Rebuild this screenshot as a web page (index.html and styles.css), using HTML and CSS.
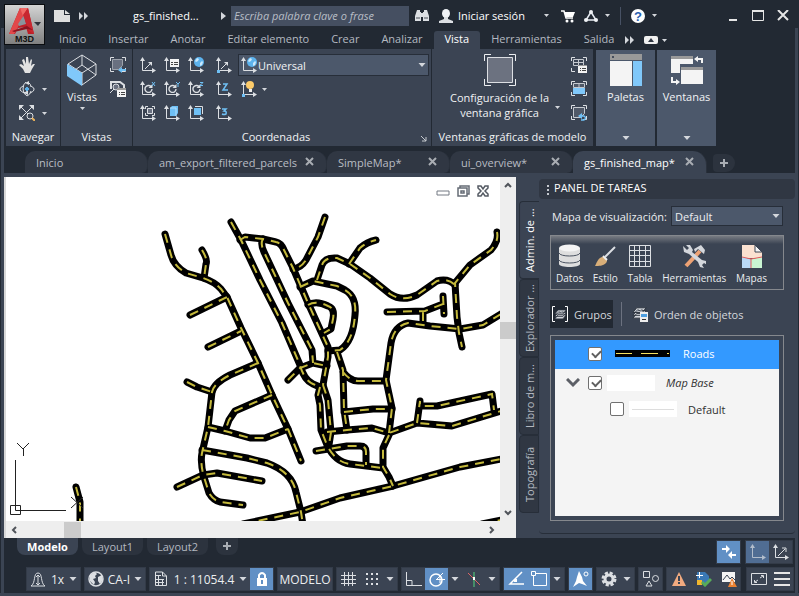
FILE: index.html
```html
<!DOCTYPE html>
<html lang="es">
<head>
<meta charset="utf-8">
<title>gs_finished_map</title>
<link rel="stylesheet" href="styles.css">
</head>
<body>
<svg class="defs" aria-hidden="true">
  <defs>
    <symbol id="axes" viewBox="0 0 16 16"><path d="M2.500 3v10.500H13" fill="none" stroke="#dcdfe3"/><path d="M2.500 0L5 4H0zM16 13.500L12 11v5z" fill="#dcdfe3"/></symbol>
    <symbol id="caret" viewBox="0 0 7 4"><path d="M0 0h7L3.500 4z" fill="#d4d7dc"/></symbol>
    <symbol id="more" viewBox="0 0 10 8"><path d="M0 0l4 4-4 4zM5 0l4 4-4 4z" fill="#d4d7dc"/></symbol>
    <symbol id="close" viewBox="0 0 10 10"><path d="M1 1l7 7M8 1L1 8" fill="none" stroke="#a9adb3" stroke-width="2"/></symbol>
    <symbol id="plus" viewBox="0 0 10 10"><path d="M5 1v8M1 5h8" fill="none" stroke="#a9adb3" stroke-width="2"/></symbol>
    <symbol id="corners" viewBox="0 0 16 16"><path d="M.500 4V.500H4M12 .500h3.500V4M.500 11v3.500H4M15.500 11v3.500H12" fill="none" stroke="#dcdfe3"/></symbol>
    <symbol id="globe" viewBox="0 0 10 10"><circle cx="5" cy="5" r="5" fill="#5cb3ee"/><path d="M1 4l2-3 2 1-1 2-2 1zM6 6l2-2 1 1-1 3-2 1z" fill="#c9e8fc"/></symbol>
    <symbol id="turn" viewBox="0 0 9 9"><path d="M7 2.500A3.500 3.500 0 1 0 8 5" fill="none" stroke="#dcdfe3" stroke-width="1.400"/><path d="M8.500 0v4H4.500z" fill="#dcdfe3"/></symbol>
    <symbol id="layers" viewBox="0 0 16 16"><path d="M1 14l4-5h10l-4 5zM1 11l4-5h10l-4 5zM1 8l4-5h10l-4 5z" fill="#d4d7dc" stroke="#2b323d"/><path d="M4 7l2-3h2L6 7zM8 7l2-3h2l-2 3z" fill="#8a9099"/></symbol>
    <g id="roads">
      <path d="M165 234L171 255Q174 266 186 273L203 278Q215 282 221 289L227 297 241 328 258 363 272 395 288 429 301 461"/>
      <path d="M202 250Q208 260 206 264L204 278M190 315L227 297M208 347L241 331"/>
      <path d="M258 363L230 375Q214 383 212 392L208 427 202 453Q200 463 204 477L209 493Q213 500 220 502L243 505"/>
      <path d="M187 382L197 387 212 392M208 427L225 431 250 438H265L288 429"/>
      <path d="M272 395L235 411 229 420 225 431"/>
      <path d="M202 450L247 458 267 463Q292 472 296 492L301 512 303 525"/>
      <path d="M177 487L203 475 217 473 262 481"/>
      <path d="M243 524L300 512 340 498 393 486 460 467 501 459"/>
      <path d="M231 222L241 240 260 280 282 323 300 365Q304 380 313 384L320 387"/>
      <path d="M240 240L245 237 263 239 276 242Q281 243 284 250L293 268 308 303 328 347V357L323 385"/>
      <path d="M263 239Q260 243 264 252L288 303 312 350 313 363M288 380L300 368 313 363 327 366"/>
      <path d="M325 217L318 237 306 260Q301 268 293 269"/>
      <path d="M300 287L313 281 337 286 345 290Q357 297 355 315 353 342 340 350L328 351"/>
      <path d="M308 305Q316 300 328 306 335 308 333 319L331 329 324 333"/>
      <path d="M317 280L322 265Q325 257 337 258L350 264 370 278 390 294Q402 302 417 295L437 281Q448 278 455 285"/>
      <path d="M349 264L360 248Q367 242 376 240M497 232Q499 241 491 250L470 265 455 283 457 317 459 333 462 347"/>
      <path d="M387 312L425 311 443 304M443 296L444 314M423 312V324"/>
      <path d="M501 314L483 325 460 329 430 326 408 323Q394 326 391 343L386 380 392 408 389 433"/>
      <path d="M337 352L343 370 344 410 347 430M343 372Q350 381 358 381H386M344 412L373 409H392"/>
      <path d="M327 432L347 430 372 428 389 433 417 423 452 426 501 411M417 423L420 401V406H437L492 394 494 410"/>
      <path d="M389 435L383 448V467L389 477 393 486M316 451L347 446H360Q366 446 366 452V465"/>
      <path d="M320 387L318 395 320 405 321 430 327 445Q335 462 350 464L383 468M323 385L328 400 331 432 329 445"/>
      <path d="M76 487L80 502V524M482 524L501 520"/>
    </g>
  </defs>
</svg>

<div class="app">
  <header class="top">
    <button class="logo" aria-label="Menú de la aplicación">
      <svg viewBox="0 0 39 39">
        <path d="M4 29L15 3h8l6 26h-6l-2-7-8 1-3 6z" fill="#bd1f28"/>
        <path d="M4 29L15 3l4 7-8 16-2 3z" fill="#e2484a"/><path d="M15 3h8l-5 8z" fill="#f06a66"/><path d="M13 19l6-9 2 9-7 2z" fill="#8b949c"/><path d="M18 10l5-7 6 26-5-3z" fill="#c72730"/><path d="M7 26l15-5 6 4-6-1-13 3z" fill="#8d1420"/>
        <path d="M29 17h7l-3 4z" fill="#30343c"/>
        <text x="10" y="37" class="logo-text">M3D</text>
      </svg>
    </button>
    <div class="titlebar">
      <svg class="doc" viewBox="0 0 16 12"><path d="M0 0h10v5h6v7H0zM11 0l5 4h-5z" fill="#dedede"/></svg>
      <svg class="more" ><use href="#more"/></svg>
      <h1>gs_finished...</h1>
      <svg class="play" viewBox="0 0 5 8"><path d="M0 0l5 4-5 4z" fill="#d4d7dc"/></svg>
      <input class="search" type="text" aria-label="Buscar" placeholder="Escriba palabra clave o frase">
      <svg class="i14 binoc" viewBox="0 0 14 14"><path d="M2 1h3v2h1v9H0V7zM9 1h3l2 6v5H8V3h1zM6 4h2v4H6z" fill="#dcdfe3"/><path d="M1 9h4M9 9h4" stroke="#4a505a"/></svg>
      <svg class="i14 user" viewBox="0 0 14 14"><ellipse cx="7" cy="4.500" rx="4" ry="4.500" fill="#f0f2f6"/><path d="M5 8h4v2l5 2v2H0v-2l5-2z" fill="#dcdfe3"/></svg>
      <a href="#sesion">Iniciar sesión</a>
      <svg class="caret gap-a"><use href="#caret"/></svg>
      <svg class="i14 cart" viewBox="0 0 14 14"><path d="M0 2h3l2 7h7" fill="none" stroke="#fff" stroke-width="1.500"/><path d="M3 3h11l-2 5H5z" fill="#fff"/><circle cx="6" cy="12" r="1.500" fill="#fff"/><circle cx="11" cy="12" r="1.500" fill="#fff"/></svg>
      <svg class="i14 share" viewBox="0 0 14 14"><path d="M7 3l-5 8h10z" fill="none" stroke="#e6eaf2" stroke-width="1.500"/><circle cx="7" cy="3" r="2" fill="#f0f2f6"/><circle cx="2" cy="11" r="2" fill="#f0f2f6"/><circle cx="12" cy="11" r="2" fill="#f0f2f6"/></svg>
      <svg class="caret gap-b"><use href="#caret"/></svg>
      <span class="rule"></span>
      <svg class="i14" viewBox="0 0 14 14"><circle cx="7" cy="7" r="7" fill="#fff"/><text x="7" y="12" text-anchor="middle" class="help-text">?</text></svg>
      <svg class="caret gap-b"><use href="#caret"/></svg>
      <div class="winbtns">
        <button aria-label="Minimizar"><svg viewBox="0 0 12 12"><path d="M2 10h8" stroke="#e6e6e6" stroke-width="2"/></svg></button>
        <button aria-label="Maximizar"><svg viewBox="0 0 12 12"><path d="M.500 .500h11v10H.500z" fill="none" stroke="#e6e6e6"/><path d="M0 1h12" stroke="#e6e6e6" stroke-width="2"/></svg></button>
        <button aria-label="Cerrar"><svg viewBox="0 0 12 12"><path d="M1 0l10 10M11 0L1 10" stroke="#e6e6e6" stroke-width="2"/></svg></button>
      </div>
    </div>
    <nav class="menu">
      <a href="#inicio">Inicio</a><a href="#insertar">Insertar</a><a href="#anotar">Anotar</a><a href="#editar">Editar elemento</a><a href="#crear">Crear</a><a href="#analizar">Analizar</a><a href="#vista" class="on">Vista</a><a href="#herramientas">Herramientas</a><a href="#salida">Salida</a>
      <svg class="more"><use href="#more"/></svg>
      <svg class="pill" viewBox="0 0 14 8"><rect width="14" height="8" rx="2" fill="#f0f0f0"/><path d="M4 6l3-4 3 4z" fill="#303743"/></svg>
      <svg class="caret"><use href="#caret"/></svg>
    </nav>
  </header>

  <section class="ribbon">
    <div class="panel p-nav">
      <div class="nav-grid">
        <svg class="i16" viewBox="0 0 16 16"><path d="M6 16L4 12 0 8l2-1 3 2-2-6 2-1 2 5V0h2l1 7 2-5 1 1-1 6 2-2h2l-3 5-2 4z" fill="#e2e2e2"/></svg><span></span>
        <svg class="i16" viewBox="0 0 16 16"><path d="M7 1Q4 3 4 8t4 7q3-1 4-5M9 1q3 2 3 5M4 5Q0 7 1 9q2 3 7 3M12 5q4 2 3 4-1 2-4 3" fill="none" stroke="#dcdfe3"/><path d="M10 0v4L6 2zM9 9v5l-4-2z" fill="#dcdfe3"/><path d="M6 8h4M8 6v4" stroke="#5bb0e8" stroke-width="2"/></svg><svg class="caret"><use href="#caret"/></svg>
        <svg class="i16" viewBox="0 0 16 16"><path d="M1 1l9 9M14 1L1 14" stroke="#dcdfe3"/><path d="M0 0h5L0 5zM15 0v5l-5-5zM0 15v-5l5 5z" fill="#dcdfe3"/><circle cx="11" cy="11" r="3" fill="#3b4453" stroke="#dcdfe3"/><path d="M13 13l3 3" stroke="#e8b25c" stroke-width="2"/></svg><svg class="caret"><use href="#caret"/></svg>
      </div>
      <h2>Navegar</h2>
    </div>
    <div class="panel p-views">
      <div class="row">
        <button class="big"><svg class="i32" viewBox="0 0 32 32"><path d="M16 1L2 10v11l14 10 14-10V10zM16 1v10M2 10l14 9 14-9M16 19v12M16 11L2 21M16 11l14 10" fill="none" stroke="#dcdfe3"/><path d="M1 10l15 9v13L1 22z" fill="#80c8fa"/></svg><span>Vistas</span><svg class="caret"><use href="#caret"/></svg></button>
        <div class="stack">
          <svg class="i16" viewBox="0 0 16 16"><use href="#corners"/><path d="M2.500 2.500h10v6l-4 4h-6z" fill="#697080" stroke="#9da2ab"/><path d="M8 13l4-3v2h4v2h-4v2z" fill="#6fc0f5"/></svg>
          <svg class="i16" viewBox="0 0 16 16"><path d="M1 8V1h9l4 3v3" fill="none" stroke="#dcdfe3" stroke-width="2"/><circle cx="6" cy="6" r="3" fill="#697080" stroke="#dcdfe3"/><path d="M4 8l-4 4" stroke="#dcdfe3"/><path d="M7 7h9v9H7z" fill="#f4f4f4"/><path d="M7 8h9" stroke="#9a9a9a" stroke-width="2"/><path d="M9 11.500h1m1 0h4M9 13.500h1m1 0h4" stroke="#444"/></svg>
        </div>
      </div>
      <h2>Vistas</h2>
    </div>
    <div class="panel p-coord">
      <div class="row">
        <div class="coord-grid">
          <svg viewBox="0 0 16 16"><use href="#axes"/><path d="M5 12l5-5" stroke="#dcdfe3"/><path d="M12 5v4L8 5z" fill="#dcdfe3"/></svg>
          <svg viewBox="0 0 16 16"><use href="#axes"/><path d="M6 2h9v8H6z" fill="#f4f4f4"/><path d="M7 5.500h2m1 0h4M7 7.500h2m1 0h4" stroke="#444"/></svg>
          <svg viewBox="0 0 16 16"><use href="#axes"/><use href="#globe" x="6" y="0" width="10" height="10"/></svg>
          <svg viewBox="0 0 16 16"><use href="#axes"/><path d="M5 12l5-5" stroke="#dcdfe3"/><path d="M12 5v4L8 5z" fill="#dcdfe3"/><path d="M1 13h3v3H1z" fill="#6fc0f5"/></svg>
          <svg viewBox="0 0 16 16"><use href="#axes"/><use href="#turn" x="4" y="3" width="9" height="9"/><path d="M12 1l3 4M15 1l-3 4" stroke="#6fc0f5"/></svg>
          <svg viewBox="0 0 16 16"><use href="#axes"/><use href="#turn" x="4" y="3" width="9" height="9"/><path d="M12 1l2 2 2-2M14 3v3" stroke="#6fc0f5" fill="none"/></svg>
          <svg viewBox="0 0 16 16"><use href="#axes"/><use href="#turn" x="4" y="3" width="9" height="9"/><path d="M12 1.500h3l-3 3h3" stroke="#6fc0f5" fill="none"/></svg>
          <svg viewBox="0 0 16 16"><use href="#axes"/><path d="M7 3h4l-4 6h5" stroke="#6fc0f5" fill="none" stroke-width="1.500"/></svg>
          <svg viewBox="0 0 16 16"><use href="#axes"/><path d="M5.500 4V1.500H8M12 1.500h2.500V4M5.500 8v2.500H8M14.500 8v2.500H12" fill="none" stroke="#dcdfe3"/><path d="M7.500 3.500h5v5h-5z" fill="#697080" stroke="#dcdfe3"/></svg>
          <svg viewBox="0 0 16 16"><use href="#axes"/><path d="M6 3l2-2h6v7l-2 3H6z" fill="#6fc0f5"/><path d="M6 3h6v8" fill="none" stroke="#b5e0ff"/></svg>
          <svg viewBox="0 0 16 16"><use href="#axes"/><path d="M7 1.500h7.500V9" fill="none" stroke="#dcdfe3"/><path d="M6 3h7v7H6z" fill="#6fc0f5"/></svg>
          <svg viewBox="0 0 16 16"><use href="#axes"/><path d="M6 4h4l-2 2q3 0 2 3-2 1-4 0" stroke="#6fc0f5" fill="none" stroke-width="1.500"/></svg>
        </div>
        <div class="ucs">
          <div class="combo">
            <svg class="i16" viewBox="0 0 16 16"><use href="#axes"/><use href="#globe" x="6" y="0" width="10" height="10"/></svg>
            <select aria-label="Sistema de coordenadas"><option>Universal</option></select>
            <svg class="caret wide"><use href="#caret"/></svg>
          </div>
          <div class="bulb"><svg class="i16" viewBox="0 0 16 16"><use href="#axes"/><circle cx="9" cy="4" r="4" fill="#fccb6a"/><path d="M8 8h3v3H8z" fill="#eee"/><path d="M1 13h3v3H1z" fill="#6fc0f5"/></svg><svg class="caret"><use href="#caret"/></svg></div>
        </div>
      </div>
      <h2>Coordenadas<svg class="launch" viewBox="0 0 6 6"><path d="M0 0l5 5M5 1v4H1" fill="none" stroke="#c5c9cf"/></svg></h2>
    </div>
    <div class="panel p-vports">
      <div class="row">
        <button class="big cfg"><svg class="i32" viewBox="0 0 32 32"><path d="M.500 7V.500H7M25 .500h6.500V7M.500 25v6.500H7M31.500 25v6.500H25" fill="none" stroke="#eceef0"/><path d="M3.500 3.500h25v25h-25z" fill="#6c7280" stroke="#dcdfe3"/></svg><span>Configuración de la<br>ventana gráfica</span></button>
        <svg class="caret side"><use href="#caret"/></svg>
        <div class="stack three">
          <svg class="i16" viewBox="0 0 16 16"><use href="#corners"/><path d="M2.500 2.500h10v6h-10zM7.500 3v6M3 5.500h9" fill="none" stroke="#c5c9cf"/><path d="M7 8h9v8H7z" fill="#f4f4f4"/><path d="M7 8.500h9" stroke="#9a9a9a"/><path d="M9 11.500h1m1 0h4M9 13.500h1m1 0h4" stroke="#444"/></svg>
          <svg class="i16" viewBox="0 0 16 16"><use href="#corners"/><path d="M2.500 2.500h11v4h-11zM8 3v4" fill="#505968" stroke="#c5c9cf"/><path d="M2 7h12v6H2z" fill="#80c8fa"/></svg>
          <svg class="i16" viewBox="0 0 16 16"><use href="#corners"/><path d="M2.500 2.500h11v6l-4 4h-7z" fill="#505968" stroke="#c5c9cf"/><path d="M9 11h4q3 2 0 4h-3" fill="none" stroke="#6fc0f5" stroke-width="1.500"/><path d="M11 8v6l-4-3z" fill="#6fc0f5"/></svg>
        </div>
      </div>
      <h2>Ventanas gráficas de modelo</h2>
    </div>
    <button class="tile"><svg class="i32" viewBox="0 0 32 32"><path d="M0 0h32v6H0z" fill="#999"/><path d="M2 2h2v2H2z" fill="#444d5c"/><path d="M0 7h22v25H0z" fill="#f4f4f4"/><path d="M23 7h9v25h-9z" fill="#80c8fa"/></svg><span>Paletas</span><svg class="caret wide"><use href="#caret"/></svg></button>
    <button class="tile"><svg class="i32" viewBox="0 0 32 32"><path d="M0 5h22v5H9v9H0zM10 16h22v14H10z" fill="#f4f4f4"/><path d="M0 2h22v3H0zM10 13h22v3H10z" fill="#999"/><path d="M31 9V5h-5M1 23v5h6" fill="none" stroke="#f4f4f4" stroke-width="2"/><path d="M23 5l4-3v6zM9 28l-4-3v6z" fill="#f4f4f4"/></svg><span>Ventanas</span><svg class="caret wide"><use href="#caret"/></svg></button>
  </section>

  <nav class="files">
    <div class="file">Inicio</div>
    <div class="file">am_export_filtered_parcels<svg class="x"><use href="#close"/></svg></div>
    <div class="file">SimpleMap*<svg class="x"><use href="#close"/></svg></div>
    <div class="file">ui_overview*<svg class="x"><use href="#close"/></svg></div>
    <div class="file on">gs_finished_map*<svg class="x"><use href="#close"/></svg></div>
    <button class="add" aria-label="Nuevo dibujo"><svg class="x"><use href="#plus"/></svg></button>
  </nav>

  <main class="work">
    <section class="canvas">
      <svg class="map" viewBox="6 177 494 344" preserveAspectRatio="xMinYMin slice" role="img" aria-label="Mapa de carreteras">
        <use href="#roads" class="road"/><use href="#roads" class="dash"/>
        <path d="M17 443l6 6 6-6M23.500 449v7M15.500 460v50.500H66M10.500 505.500h10v9h-10zM71 497l12 11M83 497l-12 11" class="ucs-mark"/>
      </svg>
      <div class="mapbtns">
        <svg viewBox="0 0 14 12"><path d="M1 6h12v4H1z" fill="#fff" stroke="#747b84"/></svg>
        <svg viewBox="0 0 14 12"><path d="M4 3V1h9v8h-2M2 3h9v8H2zM5 6h3v2H5z" fill="none" stroke="#666c76" stroke-width="1.500"/></svg>
        <svg viewBox="0 0 14 12"><path d="M2 1h3l2 3 2-3h3v2L9 6l3 3v2H9L7 8l-2 3H2V9l3-3-3-3z" fill="#fff" stroke="#555b64" stroke-width="1.500"/></svg>
      </div>
      <div class="vscroll"><svg viewBox="0 0 8 8"><path d="M1 6l3-3 3 3" /></svg><i></i><svg viewBox="0 0 8 8"><path d="M1 2l3 3 3-3"/></svg></div>
      <div class="hscroll"><svg viewBox="0 0 8 8"><path d="M6 1L3 4l3 3"/></svg><i></i><svg viewBox="0 0 8 8"><path d="M2 1l3 3-3 3"/></svg></div>
    </section>

    <aside class="tasks">
      <nav class="vtabs"><button class="on">Admin. de ...</button><button>Explorador ...</button><button>Libro de m...</button><button>Topografía</button></nav>
      <div class="taskbody">
        <h2>PANEL DE TAREAS</h2>
        <div class="content">
          <div class="mapsel"><label for="mapa">Mapa de visualización:</label><div class="combo"><select id="mapa"><option>Default</option></select><svg class="caret wide"><use href="#caret"/></svg></div></div>
          <div class="tools">
            <button><svg viewBox="0 0 24 24"><path d="M1 4v16c0 4 21 4 21 0V4z" fill="#dedede"/><ellipse cx="11.500" cy="4" rx="10.500" ry="3.500" fill="#f4f4f4"/><path d="M1 9c1 4 20 4 21 0M1 16c1 4 20 4 21 0" fill="none" stroke="#4a5260"/></svg>Datos</button>
            <button><svg viewBox="0 0 24 24"><path d="M12 13l10-10" stroke="#dcdfe3" stroke-width="2"/><path d="M2 22c2-3 2-7 7-9 3-1 7 3 4 6-3 3-7 3-11 3z" fill="#d8ae78"/><path d="M10 12l4 4" stroke="#eee" stroke-width="2"/></svg>Estilo</button>
            <button><svg viewBox="0 0 24 24"><path d="M1.500 1.500h21v21h-21zM2 6.500h21M2 11.500h21M2 17.500h21M6.500 2v21M11.500 2v21M17.500 2v21" fill="none" stroke="#dcdfe3"/></svg>Tabla</button>
            <button><svg viewBox="0 0 24 24"><path d="M4 22L18 7" stroke="#eda274" stroke-width="4"/><path d="M12 5l7-4 4 5-1 4-6-5-3 3zM1 2l4 4 2-2-3-3 4 0 3 5-1 2 10 8 4 1 1 4-3-2-2 2 2 3-4-1-2-5L7 10 2 8z" fill="#d4d7dc"/></svg>Herramientas</button>
            <button><svg viewBox="0 0 24 24"><path d="M2 1h13l7 7v6H2z" fill="#fbe1d0"/><path d="M2 13l9 2v9H2z" fill="#b9d9f6"/><path d="M11 15l11-2v11H11z" fill="#c9f5d2"/><path d="M15 1v7h7z" fill="#f4f4f4" stroke="#3b4453"/><path d="M2 13l9 2 11-2M11 15v9" fill="none" stroke="#e05b5b"/></svg>Mapas</button>
          </div>
          <div class="modes">
            <button class="on"><svg class="i16" viewBox="0 0 16 16"><use href="#layers" x="2" y="1" width="13" height="14"/><path d="M3 .500H.500v15H3M13 .500h2.500v15H13" fill="none" stroke="#fff"/></svg>Grupos</button>
            <button><svg class="i16" viewBox="0 0 16 16"><use href="#layers" x="0" y="-1" width="15" height="15"/><path d="M8 6h8v10H8z" fill="#eee"/><path d="M9 8h6v3H9z" fill="#4f9fe0"/><path d="M10 13.500h4" stroke="#333"/></svg>Orden de objetos</button>
          </div>
          <div class="tree">
            <div class="list">
              <label class="item sel"><input type="checkbox" checked><svg class="sample line" viewBox="0 0 55 7"><path d="M0 0h55v7H0z"/><path d="M1 3.500h16m9 0h17m9 0h2" stroke="#f6e05e"/></svg><span>Roads</span></label>
              <label class="item base"><svg class="chev" viewBox="0 0 14 10"><path d="M1 1l6 6 6-6" fill="none" stroke="#5c5f66" stroke-width="3"/></svg><input type="checkbox" checked><svg class="sample"></svg><span>Map Base</span></label>
              <label class="item child"><input type="checkbox"><svg class="sample" viewBox="0 0 48 16"><path d="M3 8.500h42" stroke="#ddd"/></svg><span>Default</span></label>
            </div>
          </div>
        </div>
      </div>
    </aside>
  </main>

  <footer>
    <div class="layouts">
      <button class="on">Modelo</button><button>Layout1</button><button>Layout2</button><button class="add2" aria-label="Nueva presentación"><svg class="x"><use href="#plus"/></svg></button>
      <div class="group push"><button class="cell blue" aria-label="Sincronizar"><svg class="i16" viewBox="0 0 16 16"><path d="M1 4h4V1l4 4-4 4V6H1zM15 10h-4V7l-4 4 4 4v-3h4z" fill="#fff"/></svg></button></div>
      <div class="group"><button class="cell dim" aria-label="Vista 2D"><svg class="i16" viewBox="0 0 16 16"><use href="#axes" opacity=".700"/></svg></button><button class="cell" aria-label="Vista 3D"><svg class="i16" viewBox="0 0 16 16"><use href="#axes"/><path d="M5 12l7-7M9 4h4v4" fill="none" stroke="#dcdfe3"/></svg></button></div>
    </div>
    <div class="status">
      <button class="group txt w1"><svg class="i16" viewBox="0 0 16 16"><path d="M1 15c5-3 2-13 7-13s2 10 7 13zM8 4v10M6 6l2-2 2 2M6 12l2 2 2-2" fill="none" stroke="#dcdfe3"/></svg>1x<svg class="caret wide"><use href="#caret"/></svg></button>
      <button class="group txt w2"><svg class="i16" viewBox="0 0 16 16"><circle cx="8" cy="8" r="7" fill="#3b4453" stroke="#dcdfe3" stroke-width="1.500"/><path d="M2 4l5-3 2 2-2 2 1 2-3 1 2 3-1 3-4-4zM10 6l4-2 1 5-3 4-2-3z" fill="#dcdfe3"/></svg>CA-I<svg class="caret wide"><use href="#caret"/></svg></button>
      <div class="group"><button class="txt scale"><svg class="i16" viewBox="0 0 16 16"><path d="M2.500 1v13.500h11V5l-4-4h-7M9.500 1v4h4M3 4.500h5M3 8.500h8M3 11.500h8M5.500 4v10M9.500 8v6" fill="none" stroke="#dcdfe3"/></svg>1 : 11054.4<svg class="caret wide"><use href="#caret"/></svg></button><button class="cell blue" aria-label="Bloquear"><svg class="i16" viewBox="0 0 16 16"><path d="M5 7V4q3-4 6 0v3" fill="none" stroke="#fff" stroke-width="2"/><path d="M3 7h10v8H3z" fill="#fff"/><path d="M8 9v4" stroke="#6190c5" stroke-width="2"/></svg></button></div>
      <button class="group txt model">MODELO</button>
      <div class="group"><button class="cell" aria-label="Rejilla"><svg class="i16" viewBox="0 0 16 16"><path d="M3.500 1v14M7.500 1v14M11.500 1v14M0 4.500h15M0 8.500h15M0 12.500h15" stroke="#dcdfe3"/></svg></button><button class="cell" aria-label="Forzar cursor"><svg class="i16" viewBox="0 0 16 16"><path d="M2 3h14M2 8h14M2 13h14" stroke="#dcdfe3" stroke-width="2" stroke-dasharray="2 3"/></svg></button><svg class="caret wide"><use href="#caret"/></svg></div>
      <div class="group"><button class="cell" aria-label="Orto"><svg class="i16" viewBox="0 0 16 16"><path d="M.500 1v13.500H16M1 9.500h5V14" fill="none" stroke="#dcdfe3"/></svg></button><button class="cell blue" aria-label="Polar"><svg class="i16" viewBox="0 0 16 16"><circle cx="7" cy="9" r="6" fill="none" stroke="#fff" stroke-width="1.500"/><path d="M7 9l7-7M7 8.500h9M11 4v8" fill="none" stroke="#fff"/></svg></button><svg class="caret wide"><use href="#caret"/></svg><button class="cell" aria-label="Isométrico"><svg class="i16" viewBox="0 0 16 16"><path d="M2 2l12 12" stroke="#e06464"/><path d="M8 1v15" stroke="#54d67e"/><path d="M7 6h2v3H7z" fill="#fff"/></svg></button><svg class="caret wide"><use href="#caret"/></svg></div>
      <div class="group"><button class="cell blue" aria-label="Rastreo"><svg class="i16" viewBox="0 0 16 16"><path d="M14 1L2 13h14" fill="none" stroke="#fff" stroke-width="1.500"/><path d="M6 8h3v3H6z" fill="#fff"/></svg></button><button class="cell blue" aria-label="Referencia a objetos"><svg class="i16" viewBox="0 0 16 16"><path d="M.500 .500h4v4h-4zM5 2.500h10.500v12H2.500V5" fill="none" stroke="#fff"/></svg></button><svg class="caret wide"><use href="#caret"/></svg></div>
      <div class="group"><button class="cell blue" aria-label="Escala de anotación"><svg class="i16" viewBox="0 0 16 16"><path d="M6 0l3 6 1 4 4 5-5-2-3-1-6 4 3-6 1-4z" fill="#fff"/><circle cx="13" cy="3" r="2" fill="none" stroke="#fff"/></svg></button></div>
      <div class="group"><button class="cell" aria-label="Espacio de trabajo"><svg class="i16" viewBox="0 0 16 16"><circle cx="8" cy="8" r="6" fill="none" stroke="#dcdfe3" stroke-width="3" stroke-dasharray="3 1.700"/><circle cx="8" cy="8" r="4" fill="none" stroke="#dcdfe3" stroke-width="3"/></svg></button><svg class="caret wide"><use href="#caret"/></svg></div>
      <div class="group"><button class="cell" aria-label="Aislar objetos"><svg class="i16" viewBox="0 0 16 16"><path d="M.500 .500h6v6h-6zM6 10l3 5H3z" fill="none" stroke="#dcdfe3"/><circle cx="12.500" cy="7.500" r="3" fill="none" stroke="#dcdfe3"/></svg></button></div>
      <div class="group trio"><button class="cell" aria-label="Avisos"><svg class="i16" viewBox="0 0 16 16"><path d="M8 1l7 14H1z" fill="#f2ab80"/><path d="M8 5v5M8 11v2" stroke="#3b4453" stroke-width="2"/></svg></button><button class="cell" aria-label="Normas"><svg class="i16" viewBox="0 0 16 16"><path d="M1 1h8l4 4v7H1z" fill="#3a78b5"/><path d="M3.500 1v6M0 4.500h7" stroke="#fff"/><path d="M1 9h5v5H1z" fill="#f1b72e"/><path d="M6 11l3 3 6-6" fill="none" stroke="#57ab5a" stroke-width="3"/></svg></button><button class="cell" aria-label="Imágenes"><svg class="i16" viewBox="0 0 16 16"><path d="M1 1h13v10H1z" fill="#f4f4f4"/><path d="M2 9l4-5 3 4 2-2 3 3" fill="none" stroke="#3b4453"/><path d="M11 7l5 9H7z" fill="#ec8232"/><path d="M11 10v4" stroke="#fff"/></svg></button></div>
      <div class="group"><button class="cell" aria-label="Pantalla limpia"><svg class="i16" viewBox="0 0 16 16"><path d="M.500 2.500h15v11H.500zM9 7l3-2M4 11l3-2M10 4.500h2.500V7M3.500 9v2.500H6" fill="none" stroke="#dcdfe3"/></svg></button><button class="cell" aria-label="Personalización"><svg class="i16" viewBox="0 0 16 16"><path d="M0 2h16M0 8h16M0 14h16" stroke="#e6e6e6" stroke-width="2"/></svg></button></div>
    </div>
  </footer>
</div>
</body>
</html>
```

FILE: styles.css
```css
:root {
  --dark: #222933;
  --mid: #3b4453;
  --tab: #303743;
  --field: #4c586b;
  --line: #272e39;
  --blue: #6190c5;
  --text: #eceef0;
}

* { box-sizing: border-box; }

body {
  margin: 0;
  background: var(--dark);
  color: var(--text);
  font: 11px/15px "Open Sans", "Noto Sans", sans-serif;
}

button, input, select { font: inherit; color: inherit; border: 0; padding: 0; margin: 0; background: none; }
a { color: inherit; text-decoration: none; }
h1, h2 { margin: 0; font-size: 11px; font-weight: 400; }
svg { display: block; flex: none; }
.defs { position: absolute; width: 0; height: 0; }

.app {
  min-height: 100vh;
  padding: 0 4px 5px;
  display: flex;
  flex-direction: column;
  background:
    linear-gradient(var(--mid), var(--mid)) 1px 28px / 3px 100% no-repeat,
    linear-gradient(var(--mid), var(--mid)) right 1px top 28px / 3px 100% no-repeat,
    linear-gradient(var(--mid), var(--mid)) left bottom / 100% 3px no-repeat,
    var(--dark);
}

.i14 { width: 14px; height: 14px; }
.i16 { width: 16px; height: 16px; }
.i32 { width: 32px; height: 32px; }
.caret { width: 5px; height: 3px; }
.caret.wide { width: 8px; height: 4px; }
.more { width: 10px; height: 8px; }
.x { width: 10px; height: 10px; }

/* title bar and ribbon tabs */
.top {
  display: grid;
  grid-template-columns: 41px minmax(0, 1fr);
  grid-template-rows: 31px 18px;
}
.logo {
  grid-row: 1 / 3;
  width: 41px;
  height: 41px;
  margin-top: 4px;
  border: 1px solid #0b0d10;
  background: linear-gradient(#d4d4d4, #808080);
}
.logo svg { width: 39px; height: 39px; }
.logo-text { font: bold 9px "Liberation Sans", sans-serif; fill: #111; }
.help-text { font: bold 13px "Liberation Sans", sans-serif; fill: #2a5fb0; }
.titlebar { display: flex; align-items: center; padding-left: 9px; color: #fff; }
.doc { width: 16px; height: 12px; margin-right: 9px; }
.titlebar h1 { width: 88px; margin-left: 44px; }
.play { width: 5px; height: 8px; margin: 0 5px 0 0; }
.search {
  width: 178px;
  height: 20px;
  padding: 0 3px;
  background: #454f61;
  font-style: italic;
}
.search::placeholder { color: #b9bec6; opacity: 1; }
.binoc { margin: 0 10px 0 6px; }
.user { margin-right: 5px; }
.titlebar a { width: 70px; white-space: nowrap; }
.gap-a { margin: 0 12px 0 16px; }
.gap-b { margin-left: 7px; }
.share { margin-left: 9px; }
.rule { width: 1px; height: 18px; margin: 0 10px; background: #475164; }
.winbtns { display: flex; gap: 13px; margin-left: auto; padding-right: 6px; }
.winbtns svg { width: 12px; height: 12px; }
.menu { display: flex; align-items: center; padding-left: 3px; color: #b4b9c1; white-space: nowrap; }
.menu a { height: 18px; padding: 0 11px; }
.menu a.on { background: var(--mid); color: #fff; border-radius: 3px 3px 0 0; }
.menu .more { margin-right: 9px; }
.pill { width: 14px; height: 8px; margin-right: 4px; }

/* ribbon */
.ribbon {
  display: flex;
  height: 97px;
  padding-left: 2px;
  color: #f0f2f4;
}
.panel {
  display: flex;
  flex-direction: column;
  background: var(--mid);
  border-right: 1px solid var(--dark);
}
.panel > :first-child { flex: 1; }
.panel h2 { height: 17px; text-align: center; white-space: nowrap; position: relative; }
.row { display: flex; }
.p-nav { width: 55px; }
.p-views { width: 72px; }
.p-coord { width: 299px; }
.p-coord h2 { padding-right: 12px; }
.p-vports { width: 162px; }
.nav-grid {
  display: grid;
  grid-template-columns: 16px 5px;
  grid-auto-rows: 16px;
  gap: 8px 7px;
  padding: 8px 0 0 13px;
  align-items: center;
  align-content: start;
}
.big, .tile { display: flex; flex-direction: column; align-items: center; }
.big { padding-top: 5px; gap: 3px; }
.p-views .big { width: 42px; }
.stack { display: flex; flex-direction: column; gap: 8px; padding: 8px 0 0 7px; }
.coord-grid {
  display: grid;
  grid-template-columns: 16px 16px 20px 16px;
  grid-auto-rows: 16px;
  gap: 8px;
  padding: 8px 0 0 7px;
}
.coord-grid svg { width: 16px; height: 16px; }
.ucs { flex: 1; padding: 5px 2px 0 6px; }
.combo {
  display: flex;
  align-items: center;
  height: 22px;
  border: 1px solid var(--line);
  background: var(--field);
}
.combo select { flex: 1; min-width: 0; appearance: none; padding-left: 3px; outline: 0; }
.combo .caret { margin-right: 2px; }
.ucs .combo .i16 { margin-left: 2px; }
.ucs .combo select { padding-left: 1px; }
.bulb { display: flex; align-items: center; gap: 5px; padding: 5px 0 0 3px; }
.launch { position: absolute; right: 4px; bottom: 4px; width: 6px; height: 6px; }
.cfg { width: 123px; padding-left: 12px; gap: 4px; white-space: nowrap; }
.side { margin-top: 57px; }
.three { margin-left: auto; padding-right: 6px; padding-left: 0; }
.tile {
  width: 59px;
  margin: 1px 0 0 2px;
  padding: 4px 0 6px;
  gap: 3px;
  background: var(--field);
}
.tile .caret { margin-top: auto; }

/* drawing tabs */
.files {
  display: flex;
  height: 31px;
  padding: 5px 0 0 21px;
  border-bottom: 4px solid var(--mid);
  color: #b9bdc4;
  white-space: nowrap;
}
.file {
  display: flex;
  align-items: center;
  justify-content: space-between;
  width: 123px;
  padding: 0 11px;
  border-right: 1px solid #2a313c;
  background: var(--tab);
  border-radius: 10px 12px 6px 0;
}
.file:nth-child(2) { width: 179px; }
.file.on { width: 134px; background: var(--mid); color: #fff; border-radius: 10px 14px 0 0; }
.add { width: 22px; height: 18px; margin: 3px 0 0 6px; padding-left: 6px; background: #2c333e; border-radius: 4px 9px 9px 4px; }

/* drawing area */
.work { flex: 1; display: flex; min-height: 0; background: var(--mid); }
.canvas {
  flex: 1;
  position: relative;
  display: grid;
  grid-template: minmax(0, 1fr) 17px / minmax(0, 1fr) 16px;
  border-left: 2px solid #d8d8d8;
  background: #eee;
}
.map { width: 100%; height: 100%; min-height: 0; background: #fff; }
.road { fill: none; stroke: #000; stroke-width: 7px; stroke-linecap: round; stroke-linejoin: round; }
.dash { fill: none; stroke: #c4b93c; stroke-width: 2px; stroke-dasharray: 9 7; }
.ucs-mark { fill: none; stroke: #222; }
.mapbtns { position: absolute; top: 8px; right: 26px; display: flex; gap: 6px; }
.mapbtns svg { width: 14px; height: 12px; }
.vscroll, .hscroll { display: flex; align-items: center; }
.vscroll { flex-direction: column; padding: 4px 0; }
.hscroll { padding: 0 4px; grid-column: 1; }
.vscroll svg, .hscroll svg { width: 8px; height: 8px; fill: none; stroke: #50545a; stroke-width: 2px; }
.vscroll i { width: 16px; height: 17px; margin: 133px 0 auto; background: #cbcbcb; }
.hscroll i { width: 17px; height: 16px; margin: 0 auto 0 46px; background: #cbcbcb; }

/* task pane */
.tasks { width: 279px; display: flex; padding: 2px 0 4px 3px; }
.vtabs { display: flex; flex-direction: column; width: 21px; padding-top: 22px; }
.vtabs button {
  height: 78px;
  writing-mode: vertical-rl;
  transform: rotate(180deg);
  text-align: center;
  white-space: nowrap;
  background: var(--tab);
  color: #b4b9c1;
  border: 1px solid var(--line);
  border-radius: 0 4px 4px 0;
}
.vtabs .on { background: var(--mid); color: #fff; border-left: 0; }
.taskbody { flex: 1; display: flex; flex-direction: column; border-bottom: 1px solid var(--line); border-radius: 4px; }
.taskbody h2 {
  height: 20px;
  line-height: 17px;
  margin-bottom: 7px;
  padding-left: 8px;
  background: var(--tab);
  border-radius: 4px;
  color: #fff;
}
.taskbody h2::before { content: ""; display: inline-block; height: 10px; margin-right: 5px; border-left: 2px dotted #c5c9cf; vertical-align: -3px; }
.content { flex: 1; display: flex; flex-direction: column; padding: 0 11px 12px; }
.mapsel { display: flex; align-items: center; padding: 0 1px; gap: 4px; }
.mapsel label { white-space: nowrap; margin-right: auto; padding-left: 1px; }
.mapsel .combo { width: 112px; height: 20px; }
.tools {
  display: flex;
  justify-content: space-between;
  height: 55px;
  margin: 9px 0 10px;
  padding: 8px 16px 0 5px;
  border: 1px solid #85888d;
  background: linear-gradient(#777b82, var(--mid) 8px);
}
.tools button { display: flex; flex-direction: column; align-items: center; gap: 3px; height: 42px; font-size: 10px; }
.tools svg { width: 24px; height: 24px; }
.modes { display: flex; align-items: center; height: 28px; margin-bottom: 7px; }
.modes button { display: flex; align-items: center; gap: 6px; height: 28px; padding: 0 2px; color: #d4d7dc; }
.modes .on { width: 63px; background: var(--dark); margin-right: 8px; }
.modes .on + button { height: 24px; border-left: 1px solid #6c7280; padding-left: 10px; }
.tree { flex: 1; display: flex; padding: 4px; border: 1px solid #85888d; }
.list { flex: 1; background: #f4f4f4; color: #303030; }
.item { display: flex; align-items: center; height: 29px; padding-bottom: 2px; }
.item input {
  appearance: none;
  width: 14px;
  height: 14px;
  border: 1px solid #707070;
  border-radius: 2px;
  background: #fff;
  position: relative;
}
.item input:checked::after {
  content: "";
  position: absolute;
  left: 3px;
  top: 2px;
  width: 7px;
  height: 4px;
  border: solid #606060;
  border-width: 0 0 2px 2px;
  transform: rotate(-45deg);
}
.sel { padding-left: 33px; background: #3399ff; color: #fff; }
.sample { width: 48px; height: 16px; margin: 0 11px 0 5px; background: #fff; }
.sample.line { width: 55px; height: 7px; margin: 0 13px; }
.base { padding-left: 11px; font-style: italic; }
.chev { width: 14px; height: 10px; margin-right: 8px; }
.child { padding-left: 55px; height: 24px; }

/* layout tabs and status bar */
.layouts { display: flex; height: 29px; padding: 0 2px 0 13px; gap: 4px; color: #b4b9c1; }
.layouts > button { height: 17px; width: 61px; padding-bottom: 1px; background: #2c333e; border-radius: 0 0 8px 8px; }
.layouts > .on { background: var(--mid); color: #fff; font-weight: 700; }
.layouts > .add2 { width: 22px; padding-left: 6px; margin-left: 4px; }
.group { display: flex; align-items: center; height: 24px; background: var(--mid); border: 1px solid #333b48; }
.push { margin-left: auto; }
.layouts .group { margin-top: 2px; }
.cell { width: 23px; height: 22px; display: grid; place-items: center; }
.blue { background: var(--blue); }
.dim { background: #506d93; }
.status { display: flex; gap: 3px; padding: 0 1px 0 22px; font-size: 12px; }
.status > :last-child { margin-left: auto; }
.txt { display: flex; align-items: center; justify-content: space-between; padding: 0 3px; white-space: nowrap; }
.w1 { width: 55px; }
.w2 { width: 62px; }
.scale { width: 100px; }
.model { width: 56px; padding: 0; justify-content: center; }
.trio { gap: 2px; }
.status .group > .caret { margin: 0 3px; }
.status .txt.group > .caret { margin: 0; }
```
